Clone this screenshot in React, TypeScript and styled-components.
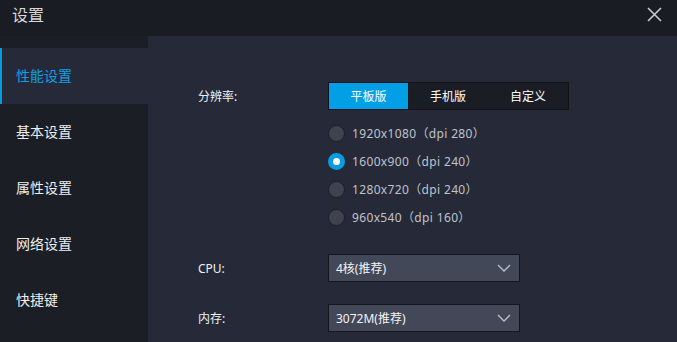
import React, { useState } from "react";
import styled, { createGlobalStyle } from "styled-components";

const Global = createGlobalStyle`
  html, body { margin: 0; padding: 0; background: #1b1d24; }
  body { font-family: "Noto Sans", "Noto Sans CJK SC", sans-serif; }
  * { box-sizing: border-box; }
`;

const Window = styled.div`
  width: 677px;
  height: 342px;
  display: flex;
  flex-direction: column;
  background: #1b1d24;
  overflow: hidden;
`;

const TitleBar = styled.div`
  height: 36px;
  flex: none;
  display: flex;
  align-items: center;
  justify-content: space-between;
  padding: 0 12px 7px 12px;
  background: #1a1c23;
`;

const Title = styled.div`
  color: #d6d8de;
  font-size: 16px;
  line-height: 20px;
`;

const CloseBtn = styled.div`
  width: 16px;
  height: 16px;
  margin-right: 3px;
  display: flex;
  align-items: center;
  justify-content: center;
`;

const Body = styled.div`
  flex: 1;
  display: flex;
  min-height: 0;
`;

const Sidebar = styled.div`
  width: 148px;
  flex: none;
  padding-top: 12px;
  background: #1c1e25;
  display: flex;
  flex-direction: column;
`;

const NavItem = styled.div<{ $active?: boolean }>`
  height: 56px;
  display: flex;
  align-items: center;
  padding-left: 14px;
  padding-bottom: 2px;
  font-size: 14px;
  color: ${(p) => (p.$active ? "#0ea0e6" : "#eceef2")};
  background: ${(p) => (p.$active ? "#262a38" : "transparent")};
  border-left: 2px solid ${(p) => (p.$active ? "#0a9ae2" : "transparent")};
`;

const Main = styled.div`
  flex: 1;
  background: #262a38;
  padding: 46px 0 0 50px;
  display: flex;
  flex-direction: column;
`;

const Row = styled.div<{ $mt?: number }>`
  display: flex;
  align-items: center;
  margin-top: ${(p) => p.$mt ?? 0}px;
`;

const Label = styled.div`
  width: 130px;
  flex: none;
  color: #eef0f4;
  font-size: 12px;
`;

const Segmented = styled.div`
  display: flex;
  height: 28px;
  border: 1px solid #111318;
  background: #1b1d24;
`;

const Segment = styled.div<{ $active?: boolean }>`
  width: 79px;
  display: flex;
  align-items: center;
  justify-content: center;
  font-size: 12px;
  color: #ffffff;
  background: ${(p) => (p.$active ? "#009fe6" : "transparent")};
  & + & { width: 80px; }
`;

const RadioList = styled.div`
  margin: 9px 0 0 130px;
  display: flex;
  flex-direction: column;
`;

const RadioRow = styled.div`
  height: 28px;
  display: flex;
  align-items: center;
  gap: 7px;
  font-size: 12px;
  letter-spacing: 0.35px;
  color: #bfc2cb;
`;

const RadioDot = styled.span<{ $on?: boolean }>`
  width: 17px;
  height: 17px;
  border-radius: 50%;
  flex: none;
  background: ${(p) => (p.$on ? "#ffffff" : "#40434f")};
  border: ${(p) => (p.$on ? "5px solid #0c9be3" : "1px solid #1c1e25")};
`;

const Select = styled.div`
  width: 192px;
  height: 28px;
  border: 1px solid #14161c;
  background: #434859;
  display: flex;
  align-items: center;
  justify-content: space-between;
  padding: 0 8px 0 7px;
  font-size: 12px;
  color: #f2f3f6;
`;

const Chevron = () => (
  <svg width="14" height="8" viewBox="0 0 14 8">
    <path d="M1 1 L7 7 L13 1" fill="none" stroke="#b9bdc8" strokeWidth="1.4" />
  </svg>
);

const resolutions = [
  "1920x1080（dpi 280）",
  "1600x900（dpi 240）",
  "1280x720（dpi 240）",
  "960x540（dpi 160）",
];

export default function App() {
  const [sel] = useState(1);
  const nav = ["性能设置", "基本设置", "属性设置", "网络设置", "快捷键"];
  return (
    <>
      <Global />
      <Window>
        <TitleBar>
          <Title>设置</Title>
          <CloseBtn>
            <svg width="15" height="15" viewBox="0 0 15 15">
              <path d="M1 1 L14 14 M14 1 L1 14" stroke="#c9cacd" strokeWidth="1.6" />
            </svg>
          </CloseBtn>
        </TitleBar>
        <Body>
          <Sidebar>
            {nav.map((n, i) => (
              <NavItem key={n} $active={i === 0}>
                {n}
              </NavItem>
            ))}
          </Sidebar>
          <Main>
            <Row>
              <Label>分辨率:</Label>
              <Segmented>
                <Segment $active>平板版</Segment>
                <Segment>手机版</Segment>
                <Segment>自定义</Segment>
              </Segmented>
            </Row>
            <RadioList>
              {resolutions.map((r, i) => (
                <RadioRow key={r}>
                  <RadioDot $on={i === sel} />
                  {r}
                </RadioRow>
              ))}
            </RadioList>
            <Row $mt={23}>
              <Label>CPU:</Label>
              <Select>
                4核(推荐)
                <Chevron />
              </Select>
            </Row>
            <Row $mt={22}>
              <Label>内存:</Label>
              <Select>
                3072M(推荐)
                <Chevron />
              </Select>
            </Row>
          </Main>
        </Body>
      </Window>
    </>
  );
}
